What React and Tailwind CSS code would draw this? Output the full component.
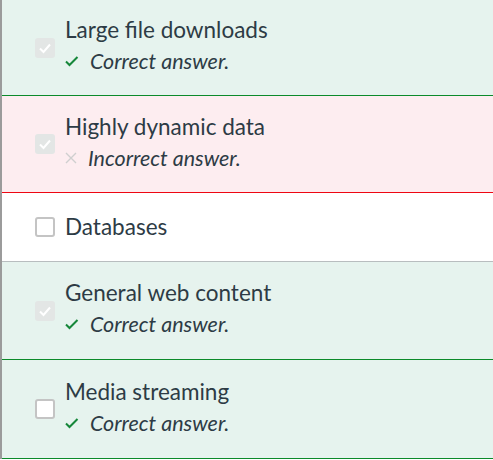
import React from "react";

const answers = [
  { label: "Large file downloads", checked: true, result: "correct", h: "h-[96px]" },
  { label: "Highly dynamic data", checked: true, result: "incorrect", h: "h-[97px]" },
  { label: "Databases", checked: false, result: null, h: "h-[69px]" },
  { label: "General web content", checked: true, result: "correct", h: "h-[98px]" },
  { label: "Media streaming", checked: false, result: "correct", h: "h-[99px]" },
];

function Box({ checked }) {
  if (checked) {
    return (
      <div className="w-[20px] h-[20px] rounded-[3px] bg-[#e3e6e5] flex items-center justify-center shrink-0">
        <svg width="14" height="14" viewBox="0 0 14 14">
          <path d="M2 7.5 L5.5 11 L12 3.5" fill="none" stroke="#fff" strokeWidth="2" />
        </svg>
      </div>
    );
  }
  return <div className="w-[20px] h-[20px] rounded-[3px] border-2 border-[#c4c4c4] bg-white shrink-0" />;
}

function Row({ a }) {
  const bg =
    a.result === "correct" ? "bg-[#e6f3ee]" : a.result === "incorrect" ? "bg-[#fdedf0]" : "bg-white";
  const border =
    a.result === "correct"
      ? "border-[#0b8a2a]"
      : a.result === "incorrect"
      ? "border-[#ee0612]"
      : "border-[#b8bdbf]";
  return (
    <div className={`${bg} ${border} ${a.h} border-b flex items-center pl-[33px]`}>
      <Box checked={a.checked} />
      <div className={`ml-[10px] flex flex-col ${a.result ? "pb-[6px]" : ""}`}>
        <div className="text-[22.5px] leading-[28px] text-[#2d3b45]">{a.label}</div>
        {a.result === "correct" && (
          <div className="flex items-center mt-[5px]">
            <svg width="14" height="14" viewBox="0 0 14 14">
              <path d="M1 7.5 L4.5 11 L12.5 3" fill="none" stroke="#16873a" strokeWidth="2" />
            </svg>
            <span className="ml-[11px] italic text-[21.5px] leading-[24px] text-[#2d3b45]">Correct answer.</span>
          </div>
        )}
        {a.result === "incorrect" && (
          <div className="flex items-center mt-[5px]">
            <svg width="12" height="12" viewBox="0 0 12 12">
              <path d="M1 1 L11 11 M11 1 L1 11" fill="none" stroke="#cfcfcf" strokeWidth="1.4" />
            </svg>
            <span className="ml-[11px] italic text-[21.5px] leading-[24px] text-[#2d3b45]">Incorrect answer.</span>
          </div>
        )}
      </div>
    </div>
  );
}

export default function App() {
  return (
    <div className="w-[493px] h-[460px] bg-white font-['Lato',sans-serif]">
      <div className="border-l-2 border-[#9b9b9b]">
        {answers.map((a) => (
          <Row key={a.label} a={a} />
        ))}
      </div>
    </div>
  );
}
